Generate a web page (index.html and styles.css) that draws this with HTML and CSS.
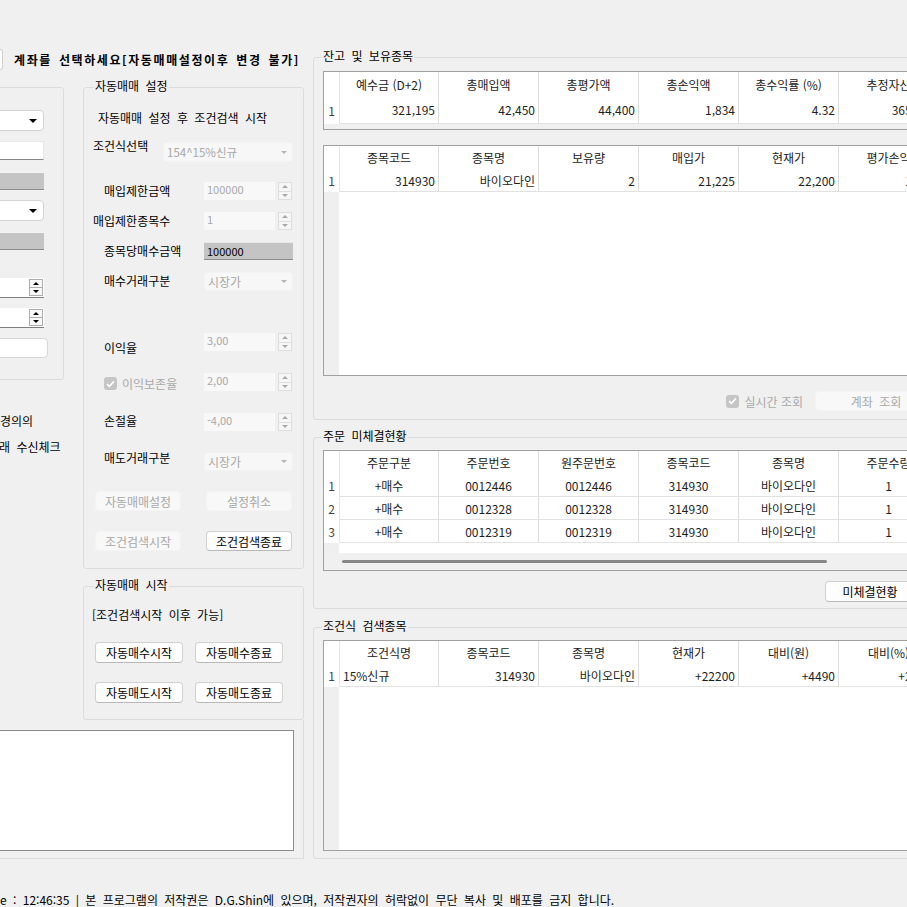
FILE: index.html
```html
<!DOCTYPE html>
<html lang="ko">
<head>
<meta charset="utf-8">
<title>조건검색 자동매매</title>
<link rel="stylesheet" href="styles.css">
</head>
<body>
<div class="form">
  <div class="left">
    <div class="title-row">
      <div class="acct-stub"></div>
      <div class="title">계좌를 선택하세요[자동매매설정이후 변경 불가]</div>
    </div>
    <div class="cols">
      <div class="left-col">
        <div class="acct-box">
          <div class="combo c1"><span class="caret"></span></div>
          <div class="tbox t1"></div>
          <div class="gbox g1"></div>
          <div class="combo c2"><span class="caret"></span></div>
          <div class="gbox g2"></div>
          <div class="spin en s1"><span class="spin-val"></span><span class="spin-btns"><i class="up"></i><i class="dn"></i></span></div>
          <div class="spin en s2"><span class="spin-val"></span><span class="spin-btns"><i class="up"></i><i class="dn"></i></span></div>
          <div class="tbox round t3"></div>
        </div>
        <div class="cut-label l1">경의의</div>
        <div class="cut-label l2">래 수신체크</div>
      </div>
      <div class="mid-col">
        <div class="group g-set">
          <div class="gtitle">자동매매 설정</div>
          <div class="note n1">자동매매 설정 후 조건검색 시작</div>
          <div class="frow r-cond">
            <span class="lbl cond">조건식선택</span>
            <div class="combo dis wide"><span class="ctext">154^15%신규</span><span class="caret"></span></div>
          </div>
          <div class="frow r1">
            <span class="lbl">매입제한금액</span>
            <div class="spin dis"><span class="spin-val">100000</span><span class="spin-btns"><i class="up"></i><i class="dn"></i></span></div>
          </div>
          <div class="frow r2">
            <span class="lbl near">매입제한종목수</span>
            <div class="spin dis"><span class="spin-val">1</span><span class="spin-btns"><i class="up"></i><i class="dn"></i></span></div>
          </div>
          <div class="frow r2">
            <span class="lbl">종목당매수금액</span>
            <div class="gbox amt">100000</div>
          </div>
          <div class="frow r2">
            <span class="lbl">매수거래구분</span>
            <div class="combo dis"><span class="ctext">시장가</span><span class="caret"></span></div>
          </div>
          <div class="frow r5">
            <span class="lbl down">이익율</span>
            <div class="spin dis"><span class="spin-val">3,00</span><span class="spin-btns"><i class="up"></i><i class="dn"></i></span></div>
          </div>
          <div class="frow r6">
            <span class="lbl chk-lbl"><span class="chk"><svg width="9" height="8" viewBox="0 0 9 8"><path d="M1 4.2 L3.4 6.4 L8 1.4" fill="none" stroke="#fff" stroke-width="1.6"/></svg></span>이익보존율</span>
            <div class="spin dis"><span class="spin-val">2,00</span><span class="spin-btns"><i class="up"></i><i class="dn"></i></span></div>
          </div>
          <div class="frow r6">
            <span class="lbl up3">손절율</span>
            <div class="spin dis"><span class="spin-val">-4,00</span><span class="spin-btns"><i class="up"></i><i class="dn"></i></span></div>
          </div>
          <div class="frow r8">
            <span class="lbl up6">매도거래구분</span>
            <div class="combo dis"><span class="ctext">시장가</span><span class="caret"></span></div>
          </div>
          <div class="brow b1">
            <button class="btn dis w86 first">자동매매설정</button>
            <button class="btn dis w86 second">설정취소</button>
          </div>
          <div class="brow b2">
            <button class="btn dis w86 first">조건검색시작</button>
            <button class="btn w86 second">조건검색종료</button>
          </div>
        </div>
        <div class="group g-start">
          <div class="gtitle">자동매매 시작</div>
          <div class="note n2">[조건검색시작 이후 가능]</div>
          <div class="brow b3">
            <button class="btn w88 first2">자동매수시작</button>
            <button class="btn w88 second2">자동매수종료</button>
          </div>
          <div class="brow b3">
            <button class="btn w88 first2">자동매도시작</button>
            <button class="btn w88 second2">자동매도종료</button>
          </div>
        </div>
      </div>
    </div>
    <div class="log-panel">
      <div class="log-box"></div>
    </div>
    <div class="status"><span class="status-cut">Tim</span>e : 12:46:35 | 본 프로그램의 저작권은 D.G.Shin에 있으며, 저작권자의 허락없이 무단 복사 및 배포를 금지 합니다.</div>
  </div>

  <div class="right">
    <div class="group rg g-bal">
      <div class="gtitle">잔고 및 보유종목</div>
      <div class="dgv t-sum">
        <div class="dgv-row hdr h24"><span class="rh"></span><span>예수금 (D+2)</span><span>총매입액</span><span>총평가액</span><span>총손익액</span><span>총수익률 (%)</span><span>추정자산</span></div>
        <div class="dgv-row data h28 num"><span class="rh">1</span><span>321,195</span><span>42,450</span><span>44,400</span><span>1,834</span><span>4.32</span><span>365,595</span></div>
      </div>
      <div class="dgv t-hold">
        <div class="dgv-row hdr h23"><span class="rh"></span><span>종목코드</span><span>종목명</span><span>보유량</span><span>매입가</span><span>현재가</span><span>평가손익</span></div>
        <div class="dgv-row data h23 num"><span class="rh">1</span><span>314930</span><span>바이오다인</span><span>2</span><span>21,225</span><span>22,200</span><span>1,950</span></div>
        <div class="dgv-fill"></div>
      </div>
      <div class="ctrl-row">
        <span class="chk"><svg width="9" height="8" viewBox="0 0 9 8"><path d="M1 4.2 L3.4 6.4 L8 1.4" fill="none" stroke="#fff" stroke-width="1.6"/></svg></span>
        <span class="dis-text">실시간 조회</span>
        <button class="btn dis acct-btn">계좌 조회</button>
      </div>
    </div>

    <div class="group rg g-ord">
      <div class="gtitle">주문 미체결현황</div>
      <div class="dgv t-ord">
        <div class="dgv-row hdr h23"><span class="rh"></span><span>주문구분</span><span>주문번호</span><span>원주문번호</span><span>종목코드</span><span>종목명</span><span>주문수량</span></div>
        <div class="dgv-row data h23 ctr"><span class="rh">1</span><span>+매수</span><span>0012446</span><span>0012446</span><span>314930</span><span>바이오다인</span><span>1</span></div>
        <div class="dgv-row data h23 ctr"><span class="rh">2</span><span>+매수</span><span>0012328</span><span>0012328</span><span>314930</span><span>바이오다인</span><span>1</span></div>
        <div class="dgv-row data h23 ctr"><span class="rh">3</span><span>+매수</span><span>0012319</span><span>0012319</span><span>314930</span><span>바이오다인</span><span>1</span></div>
        <div class="dgv-fill short"></div>
        <div class="hscroll"><div class="thumb"></div></div>
      </div>
      <div class="ctrl-row">
        <button class="btn ord-btn">미체결현황</button>
      </div>
    </div>

    <div class="group rg g-cond">
      <div class="gtitle">조건식 검색종목</div>
      <div class="dgv t-cond">
        <div class="dgv-row hdr h23"><span class="rh"></span><span>조건식명</span><span>종목코드</span><span>종목명</span><span>현재가</span><span>대비(원)</span><span>대비(%)</span></div>
        <div class="dgv-row data h23 num"><span class="rh">1</span><span class="lft">15%신규</span><span>314930</span><span>바이오다인</span><span>+22200</span><span>+4490</span><span>+25.35</span></div>
        <div class="dgv-fill"></div>
      </div>
    </div>
  </div>
</div>
</body>
</html>
```

FILE: styles.css
```css
* { box-sizing: border-box; margin: 0; padding: 0; }

html, body {
  width: 907px;
  height: 907px;
  overflow: hidden;
  background: #f0f0f0;
}

body {
  font-family: "Noto Sans CJK KR", "Noto Sans", sans-serif;
  font-size: 12px;
  color: #000;
}

.form {
  display: flex;
  width: 907px;
  height: 907px;
  overflow: hidden;
}

/* ---------- left area ---------- */
.left {
  width: 304px;
  flex: none;
  padding-top: 49px;
  display: flex;
  flex-direction: column;
}

.title-row {
  display: flex;
  align-items: center;
  height: 21px;
}

.acct-stub {
  width: 3px;
  height: 21px;
  background: #fff;
  border: 1px solid #d0d0d0;
  border-left: none;
  border-radius: 0 3px 3px 0;
}

.title {
  margin-left: 11px;
  font-weight: bold;
  font-size: 12px;
  letter-spacing: 1.6px;
  word-spacing: 2px;
  line-height: 16px;
  white-space: nowrap;
}

.cols {
  display: flex;
  margin-top: 17px;
}

.left-col {
  width: 124px;
  margin-left: -60px;
  flex: none;
  display: flex;
  flex-direction: column;
}

.acct-box {
  border: 1px solid #dcdcdc;
  border-radius: 3px;
  display: flex;
  flex-direction: column;
  align-items: flex-end;
  padding-right: 19px;
  padding-bottom: 21px;
}

.cut-label {
  margin-left: 60px;
  line-height: 16px;
  word-spacing: 3px;
  white-space: nowrap;
}
.cut-label.l1 { margin-top: 33px; }
.cut-label.l2 { margin-top: 10px; margin-left: 59px; }

/* form controls */
.combo {
  display: flex;
  align-items: center;
  background: #fff;
  border: 1px solid #d3d3d3;
  border-radius: 4px;
  width: 90px;
  height: 21px;
}
.combo .caret {
  margin-left: auto;
  margin-right: 6px;
  width: 0;
  height: 0;
  border-left: 4px solid transparent;
  border-right: 4px solid transparent;
  border-top: 4px solid #000;
}
.combo.c1 { margin-top: 22px; }
.combo.c2 { margin-top: 10px; }

.combo.dis {
  background: #f7f7f7;
  border-color: #f3f3f3;
  width: 89px;
  height: 19px;
  border-radius: 3px;
}
.combo.dis.wide { width: 130px; height: 20px; }
.combo.dis .ctext {
  padding-left: 3px;
  color: #a8a8a8;
  font-size: 12px;
  white-space: nowrap;
}
.combo.dis.wide .ctext { font-size: 11.5px; }
.combo.dis .caret {
  margin-right: 5px;
  border-left-width: 3px;
  border-right-width: 3px;
  border-top: 3px solid #b5b5b5;
}

.tbox {
  background: #fff;
  border: 1px solid #e6e6e6;
  border-bottom-color: #868686;
  width: 90px;
  height: 19px;
}
.tbox.t1 { margin-top: 10px; }
.tbox.round {
  border: 1px solid #d6d6d6;
  border-radius: 4px;
  height: 20px;
  margin-top: 10px;
  margin-right: -4px;
}

.gbox {
  background: #c4c4c4;
  border-top: 1px solid #f4f4f4;
  border-bottom: 1px solid #8c8c8c;
  width: 90px;
  height: 18px;
}
.gbox.g1 { margin-top: 12px; }
.gbox.g2 { margin-top: 11px; }
.gbox.amt {
  width: 89px;
  font-size: 11px;
  line-height: 16px;
  padding-left: 3px;
  color: #000;
  border-top-color: #e8e8e8;
}

.spin {
  display: flex;
  align-items: stretch;
  height: 20px;
  width: 90px;
}
.spin .spin-val {
  flex: 1;
  padding-left: 3px;
  white-space: nowrap;
}
.spin .spin-btns {
  width: 14px;
  display: flex;
  flex-direction: column;
  border: 1px solid #adadad;
  background: #f7f7f7;
}
.spin .spin-btns i {
  flex: 1;
  display: flex;
  align-items: center;
  justify-content: center;
}
.spin .spin-btns i.up { border-bottom: 1px solid #adadad; }
.spin .spin-btns i::after {
  content: "";
  width: 0;
  height: 0;
  border-left: 3px solid transparent;
  border-right: 3px solid transparent;
}
.spin .spin-btns i.up::after { border-bottom: 3px solid #000; }
.spin .spin-btns i.dn::after { border-top: 3px solid #000; }

.spin.en {
  background: #fff;
  border-bottom: 1px solid #7e7e7e;
  padding: 1px 1px 1px 0;
}
.spin.s1 { margin-top: 28px; }
.spin.s2 { margin-top: 10px; }

.spin.dis {
  width: 89px;
  height: 18px;
}
.spin.dis .spin-val {
  background: #f8f8f8;
  color: #a8a8a8;
  font-size: 11px;
  line-height: 14px;
  padding-left: 3px;
  margin-right: 3px;
}
.spin.dis .spin-btns {
  width: 14px;
  margin-right: 1px;
  border-color: #dedede;
  background: #f6f6f6;
}
.spin.dis .spin-btns i.up { border-bottom-color: #dedede; }
.spin.dis .spin-btns i.up::after { border-bottom-color: #a8a8a8; }
.spin.dis .spin-btns i.dn::after { border-top-color: #a8a8a8; }

/* ---------- middle column / groups ---------- */
.mid-col {
  width: 221px;
  margin-left: 19px;
  flex: none;
  display: flex;
  flex-direction: column;
}

.group {
  border: 1px solid #dcdcdc;
  border-radius: 3px;
  display: flex;
  flex-direction: column;
}

.gtitle {
  align-self: flex-start;
  margin-top: -10px;
  margin-left: 10px;
  padding: 0 1px;
  line-height: 16px;
  background: #f0f0f0;
  word-spacing: 3px;
  white-space: nowrap;
}

.g-set { padding-bottom: 17px; }
.g-start { margin-top: 17px; padding-bottom: 16px; }

.note {
  line-height: 16px;
  word-spacing: 3px;
  white-space: nowrap;
}
.note.n1 { margin-top: 16px; margin-left: 14px; }
.note.n2 { margin-top: 14px; margin-left: 8px; }

.frow {
  display: flex;
  align-items: center;
  height: 20px;
}
.frow.r-cond { margin-top: 16px; }
.frow.r1 { margin-top: 19px; }
.frow.r2 { margin-top: 10px; }
.frow.r5 { margin-top: 41px; }
.frow.r6 { margin-top: 20px; }
.frow.r8 { margin-top: 19px; }

.lbl {
  width: 120px;
  flex: none;
  padding-left: 20px;
  line-height: 16px;
  white-space: nowrap;
}
.lbl.near { padding-left: 9px; }
.lbl.cond { width: 79px; padding-left: 9px; margin-bottom: 12px; }
.lbl.down { margin-top: 11px; }
.lbl.up3 { margin-bottom: 3px; }
.lbl.up6 { margin-bottom: 6px; }
.lbl.chk-lbl {
  display: flex;
  align-items: center;
  color: #a8a8a8;
  margin-top: 3px;
}

.chk {
  width: 13px;
  height: 13px;
  flex: none;
  border-radius: 3px;
  background: #c5c5c5;
  display: inline-flex;
  align-items: center;
  justify-content: center;
  margin-right: 5px;
}

.brow {
  display: flex;
  height: 20px;
  margin-top: 20px;
}
.brow.b3 { height: 21px; margin-top: 19px; }

.btn {
  font-family: inherit;
  font-size: 12px;
  color: #000;
  background: #fdfdfd;
  border: 1px solid #d0d0d0;
  border-bottom-color: #b9b9b9;
  border-radius: 4px;
  height: 100%;
  white-space: nowrap;
  word-spacing: 3px;
}
.btn.dis {
  color: #a8a8a8;
  background: #f8f8f8;
  border-color: #f4f4f4;
}
.btn.w86 { width: 86px; }
.btn.w88 { width: 88px; }
.btn.first { margin-left: 11px; }
.btn.second { margin-left: 25px; }
.btn.first2 { margin-left: 11px; }
.btn.second2 { margin-left: 12px; }

/* log + status */
.log-panel {
  width: 304px;
  border-right: 1px solid #dcdcdc;
  border-bottom: 1px solid #dcdcdc;
  padding-top: 10px;
  padding-bottom: 7px;
}
.log-box {
  width: 294px;
  height: 121px;
  background: #fff;
  border: 1px solid #8a8a8a;
  border-left: none;
}

.status {
  margin-top: 32px;
  line-height: 14px;
  font-size: 12px;
  white-space: nowrap;
  word-spacing: 3px;
  color: #000;
}
.status-cut {
  display: inline-block;
  margin-left: -30px;
  width: 30px;
  overflow: hidden;
  text-align: right;
  word-spacing: 0;
}

/* ---------- right area ---------- */
.right {
  width: 634px;
  flex: none;
  margin-left: 9px;
  padding-top: 57px;
  display: flex;
  flex-direction: column;
}

.group.rg {
  padding: 0 9px;
}
.rg .gtitle { margin-left: -1px; }
.g-bal { padding-bottom: 8px !important; }
.g-ord { margin-top: 17px; padding-bottom: 6px !important; }
.g-cond { margin-top: 18px; padding-bottom: 7px !important; }

.gtitle + .dgv { margin-top: 6px; }
.g-bal .gtitle + .dgv { margin-top: 7px; }

.dgv {
  width: 614px;
  border: 1px solid #a0a0a0;
  background: #f0f0f0;
  overflow: hidden;
  display: flex;
  flex-direction: column;
  color: #1e1e1e;
}
.t-sum { height: 59px; }
.t-hold { height: 231px; margin-top: 15px; }
.t-ord { height: 121px; }
.t-cond { height: 211px; }

.dgv-row {
  display: grid;
  grid-template-columns: 16px 99px 100px 100px 100px 100px 100px;
  flex: none;
  background: #fff;
}
.dgv-row.h23 { height: 23px; }
.dgv-row.h24 { height: 24px; }
.dgv-row.h28 { height: 28px; }

.dgv-row > span {
  border-right: 1px solid #dedede;
  white-space: nowrap;
  overflow: hidden;
  display: flex;
  align-items: center;
}
.dgv-row.hdr > span {
  justify-content: center;
  color: #222;
}
.dgv-row.data > span {
  border-bottom: 1px solid #e2e2e2;
  padding: 0 3px;
}
.dgv-row.num > span { justify-content: flex-end; }
.dgv-row.ctr > span { justify-content: center; }
.dgv-row.data > span.lft { justify-content: flex-start; }
.dgv-row > span.rh {
  justify-content: center;
  padding: 0;
  color: #444;
  border-bottom: none;
  border-right-color: #e6e6e6;
}
.dgv-row.data > span.rh { border-bottom: none; }

.dgv-fill {
  flex: 1;
  background: linear-gradient(to right, #efefef 15px, #fff 15px);
}
.dgv-fill.short { flex: none; height: 10px; }

.hscroll {
  height: 17px;
  flex: none;
  background: #f0f0f0;
  display: flex;
  align-items: center;
}
.hscroll .thumb {
  margin-left: 18px;
  width: 485px;
  height: 3px;
  border-radius: 2px;
  background: #878787;
}

.ctrl-row {
  display: flex;
  align-items: center;
  justify-content: flex-end;
  height: 20px;
  margin-top: 15px;
}
.g-ord .ctrl-row { margin-top: 10px; height: 21px; }
.ctrl-row .chk { margin-right: 5px; }
.dis-text {
  color: #a8a8a8;
  white-space: nowrap;
}
.acct-btn { width: 122px; margin-left: 12px; }
.ord-btn { width: 90px; margin-right: 22px; }
```
